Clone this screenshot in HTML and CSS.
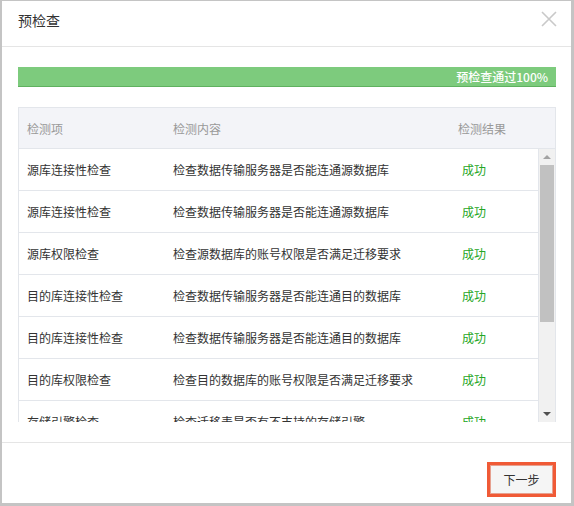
FILE: index.html
```html
<!DOCTYPE html>
<html lang="zh">
<head>
<meta charset="utf-8">
<title>预检查</title>
<link rel="stylesheet" href="styles.css">
</head>
<body>
<div class="dialog">
  <div class="dlg-head">
    <span class="dlg-title">预检查</span>
    <svg class="close" width="16" height="16" viewBox="0 0 16 16"><path d="M1 1L15 15M15 1L1 15" stroke="#c9c9c9" stroke-width="1.6" fill="none"/></svg>
  </div>
  <div class="dlg-body">
    <div class="progress"><span>预检查通过100%</span></div>
    <div class="tbl">
      <div class="thead">
        <span>检测项</span><span>检测内容</span><span class="c3h">检测结果</span>
      </div>
      <div class="tbody">
        <div class="rows">
          <div class="row"><span>源库连接性检查</span><span>检查数据传输服务器是否能连通源数据库</span><span class="ok">成功</span></div>
          <div class="row"><span>源库连接性检查</span><span>检查数据传输服务器是否能连通源数据库</span><span class="ok">成功</span></div>
          <div class="row"><span>源库权限检查</span><span>检查源数据库的账号权限是否满足迁移要求</span><span class="ok">成功</span></div>
          <div class="row"><span>目的库连接性检查</span><span>检查数据传输服务器是否能连通目的数据库</span><span class="ok">成功</span></div>
          <div class="row"><span>目的库连接性检查</span><span>检查数据传输服务器是否能连通目的数据库</span><span class="ok">成功</span></div>
          <div class="row"><span>目的库权限检查</span><span>检查目的数据库的账号权限是否满足迁移要求</span><span class="ok">成功</span></div>
          <div class="row"><span>存储引擎检查</span><span>检查迁移表是否有不支持的存储引擎</span><span class="ok">成功</span></div>
        </div>
        <div class="sbar">
          <div class="arr up"></div>
          <div class="thumb"></div>
          <div class="track"></div>
          <div class="arr down"></div>
        </div>
      </div>
    </div>
  </div>
  <div class="dlg-foot">
    <button class="btn">下一步</button>
  </div>
</div>
</body>
</html>
```
FILE: styles.css
```css
html, body {
  margin: 0;
  padding: 0;
}
body {
  background: #c4c4c4;
  font-family: "Noto Sans CJK SC", "Liberation Sans", sans-serif;
  font-size: 12px;
  color: #333;
  padding: 1px 3px 3px 2px;
}
.dialog {
  background: #fff;
  height: 502px;
  display: flex;
  flex-direction: column;
}
.dlg-head {
  height: 45px;
  border-bottom: 1px solid #e5e5e5;
  display: flex;
  align-items: center;
  justify-content: space-between;
  padding: 0 14px 0 16px;
}
.dlg-title {
  font-size: 14px;
  color: #333;
  margin-top: -7px;
}
.close {
  margin-top: -10px;
}
.dlg-body {
  padding: 20px 15px 20px 16px;
  border-bottom: 1px solid #e5e5e5;
}
.progress {
  height: 19px;
  background: #7dcb7d;
  border-bottom: 1px solid #5fb15f;
  display: flex;
  align-items: center;
  justify-content: flex-end;
  padding-right: 8px;
  color: #fff;
  font-weight: 500;
}
.tbl {
  margin-top: 20px;
  border: 1px solid #e3e6eb;
  border-bottom: none;
}
.thead {
  height: 40px;
  background: #f3f4f8;
  border-bottom: 1px solid #e3e6eb;
  display: grid;
  grid-template-columns: 146px 285px 1fr;
  align-items: center;
  padding-left: 8px;
  color: #999;
}
.tbody {
  display: flex;
  height: 273px;
  overflow: hidden;
}
.rows {
  flex: 1;
  overflow: hidden;
  border-right: 1px solid #e3e6eb;
}
.row {
  height: 40px;
  padding-bottom: 1px;
  border-bottom: 1px solid #e3e6eb;
  display: grid;
  grid-template-columns: 146px 289px 1fr;
  align-items: center;
  padding-left: 8px;
  color: #333;
}
.ok {
  color: #25a625;
}
.sbar {
  width: 16px;
  background: #f1f1f1;
  display: flex;
  flex-direction: column;
}
.arr {
  height: 16px;
  display: flex;
  align-items: center;
  justify-content: center;
}
.arr.up::before {
  content: "";
  border-left: 4px solid transparent;
  border-right: 4px solid transparent;
  border-bottom: 4px solid #a3a3a3;
}
.arr.down::before {
  content: "";
  border-left: 4px solid transparent;
  border-right: 4px solid transparent;
  border-top: 4px solid #505050;
}
.thumb {
  height: 157px;
  margin: 0 1px;
  background: #c1c1c1;
}
.track {
  flex: 1;
}
.dlg-foot {
  flex: 1;
  display: flex;
  justify-content: flex-end;
  align-items: flex-start;
  padding: 19px 15px 0 0;
}
.btn {
  width: 69px;
  height: 35px;
  background: #f5f5f5;
  border: 3px solid #f05a36;
  outline: none;
  font-family: inherit;
  font-size: 12px;
  color: #333;
  padding: 0;
  box-shadow: inset 0 0 0 1px #e6a08f;
}
```
